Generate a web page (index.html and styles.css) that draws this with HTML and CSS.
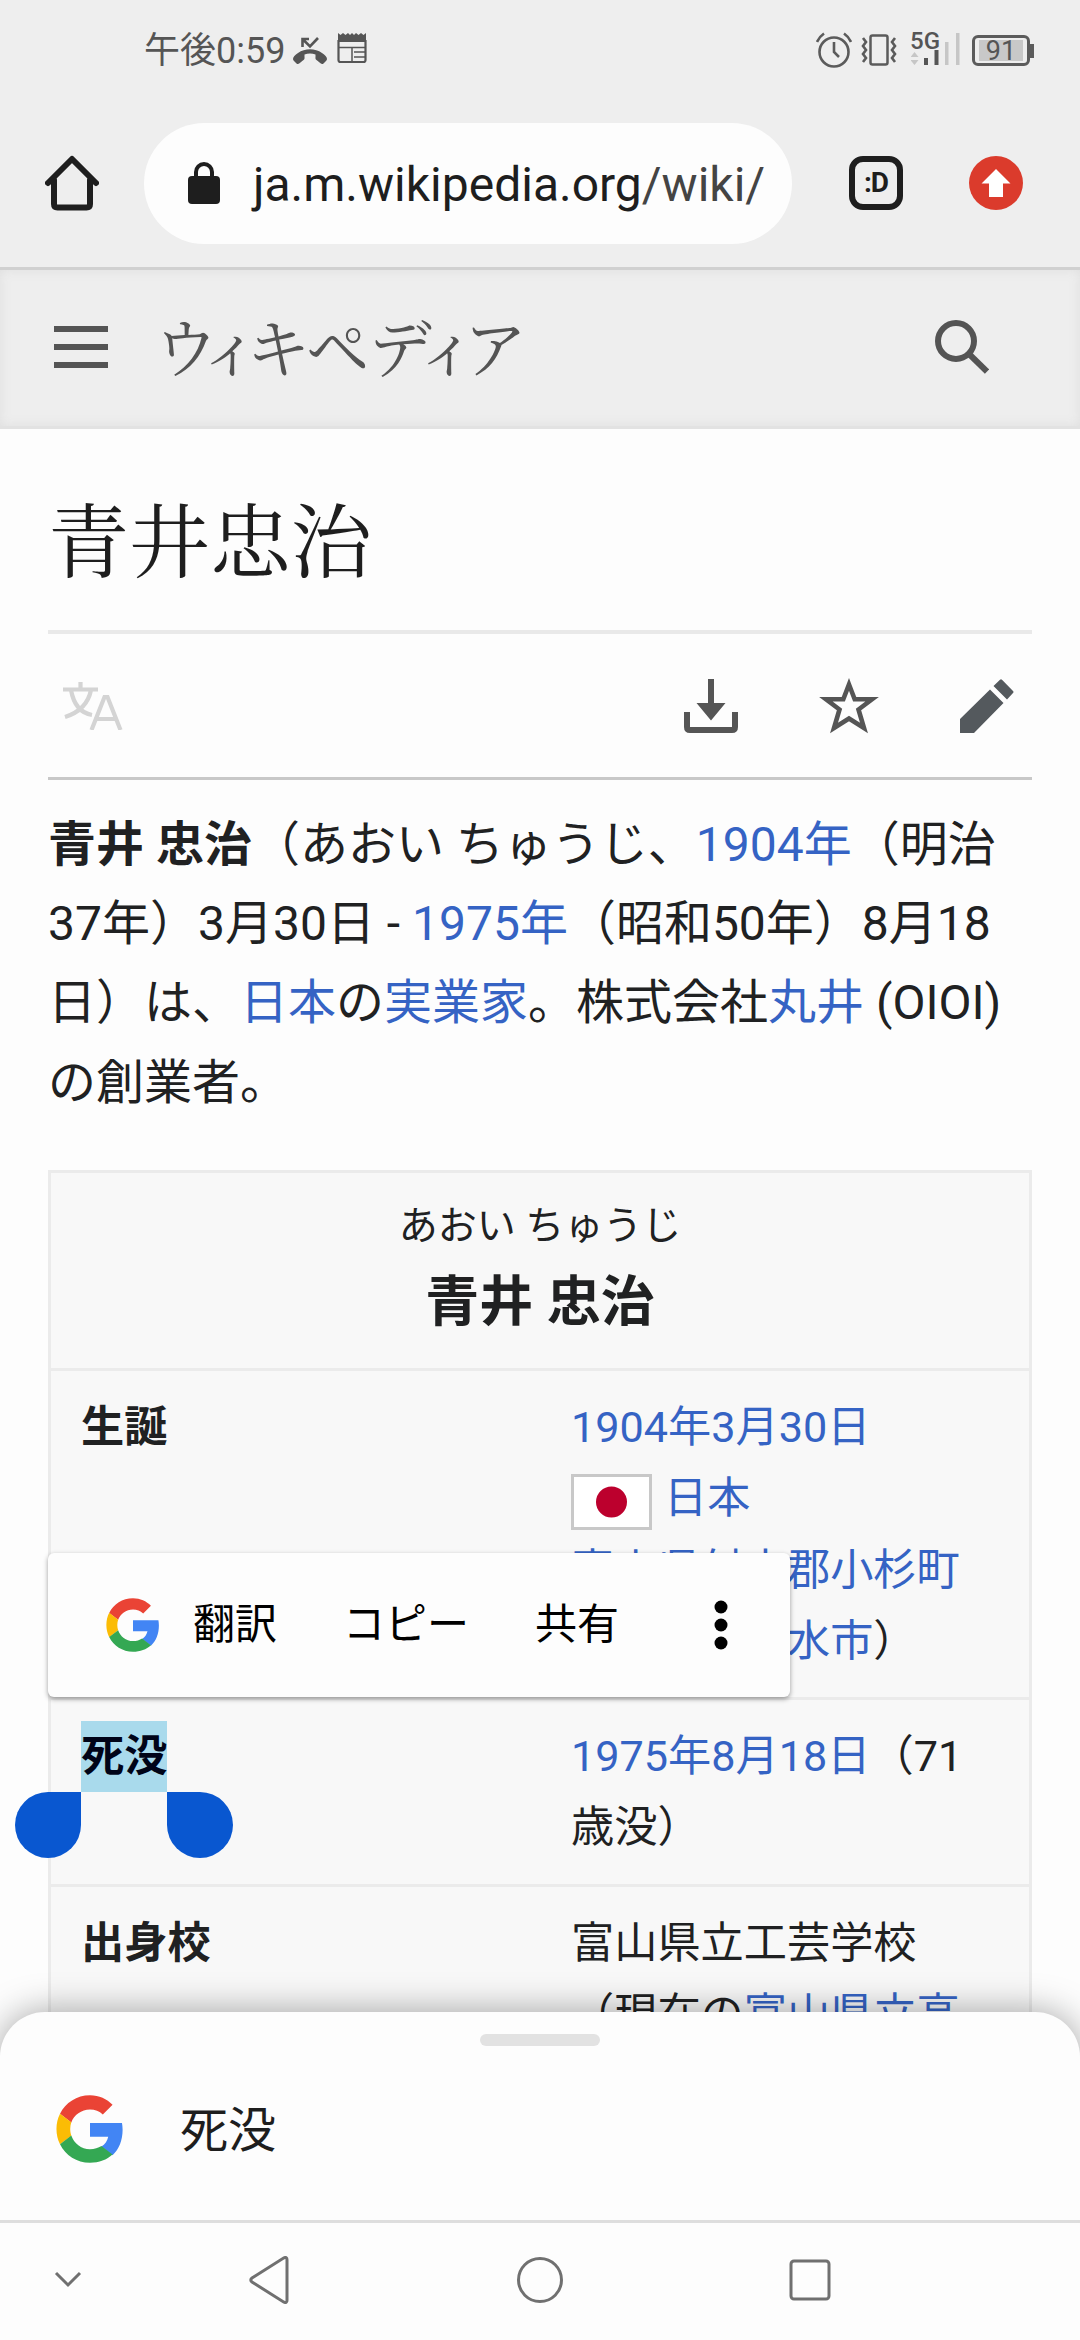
FILE: index.html
```html
<!DOCTYPE html>
<html lang="ja">
<head>
<meta charset="utf-8">
<title>青井忠治</title>
<link rel="stylesheet" href="styles.css">
</head>
<body>
<svg class="defs" aria-hidden="true">
  <symbol id="google" viewBox="2 2 44 44">
    <path fill="#ea4335" d="M24 11.400c3.200 0 6.100 1.100 8.300 3.200l6.300-6.300C34.900 4.600 29.900 2.200 24 2.200 15.400 2.200 8.100 7.100 4.600 14.200l7.300 5.600C13.600 15 18.400 11.400 24 11.400z"/>
    <path fill="#4285f4" d="M45.100 24.500c0-1.600-.200-3-.400-4.400H24v8.900h11.800c-.600 2.700-2.100 4.900-4.400 6.400l7.200 5.600c4.200-3.900 6.500-9.700 6.500-16.500z"/>
    <path fill="#fbbc05" d="M11.900 28.300c-.400-1.300-.700-2.800-.700-4.300s.300-2.900.700-4.300l-7.300-5.600C3.100 17.100 2.300 20.500 2.300 24s.800 6.900 2.300 9.900z"/>
    <path fill="#34a853" d="M24 45.800c5.900 0 10.900-1.900 14.600-5.300l-7.200-5.500c-2 1.300-4.500 2.100-7.400 2.100-5.700 0-10.400-3.800-12.100-8.900l-7.300 5.600C8.100 40.900 15.400 45.800 24 45.800z"/>
  </symbol>
</svg>
<div class="screen">
  <header class="statusbar">
    <span class="clock">午後0:59</span>
    <svg class="ic-missed" viewBox="0 0 36 30"><path fill="#555" d="M1 24c0-2 2-4 5-6 7-5 17-5 24 0 3 2 5 4 5 6 0 1-1 2-1.500 2.500l-2 2c-1 .8-2 .6-3-.2l-4-3.300c-1-.8-1.200-1.500-1-3v-2.500c-3.500-1.200-7.500-1.200-11 0V22c.2 1.500 0 2.200-1 3l-4 3.300c-1 .8-2 1-3 .2l-2-2C2 26 1 25 1 24z"/><path fill="none" stroke="#555" stroke-width="2.600" d="M10.500 12V4H17M11 4.500l7 7L26 3"/></svg>
    <svg class="ic-news" viewBox="0 0 30 32"><path fill="#555" d="M1 1l2.500 2L6 1l2.500 2L11 1l2 2 2-2 2 2 2-2 2.500 2L24 1l2.500 2L29 1v9H1z"/><path fill="none" stroke="#555" stroke-width="2.200" d="M1.500 8v20q0 2 2 2h23q2 0 2-2V8"/><path fill="none" stroke="#555" stroke-width="1.500" d="M1.500 15.500h27M15 15.500V30M17 20h11M17 25h11"/></svg>
    <span class="spacer"></span>
    <svg class="ic-alarm" viewBox="0 0 36 36"><g fill="none" stroke="#5b5b5b" stroke-width="2.600"><circle cx="18" cy="20" r="14.500"/><path d="M18 10v10l5 5M1 10q2-5 7-8.500M35 10q-2-5-7-8.500"/></g></svg>
    <svg class="ic-vib" viewBox="0 0 36 32"><g fill="none" stroke="#5b5b5b" stroke-width="2.500"><rect x="9.500" y="1.500" width="17" height="29" rx="2"/><path stroke-width="2.600" d="M2 4l3 4-3 4 3 4-3 4 3 4-3 4M34 4l-3 4 3 4-3 4 3 4-3 4 3 4"/></g></svg>
    <span class="signal"><span class="net">5G</span>
      <svg class="ic-bars" viewBox="0 0 50 34"><path fill="#c6c6c6" d="M3.500 20l4 5h-8zM3.500 33l4-5h-8zM34 10h3.500v23H34zM45 1h3.500v32H45z"/><path fill="#555" d="M13 26h4v7h-4zM23.500 18h4v15h-4z"/></svg>
    </span>
    <span class="battery"><span class="level">91</span></span>
  </header>
  <nav class="toolbar">
    <svg class="ic-home" viewBox="0 0 54 56"><path fill="none" stroke="#1e1e1e" stroke-width="6" stroke-linecap="round" stroke-linejoin="round" d="M3 28L27 4l24 24M9 25v24q0 3.500 3.500 3.500h29q3.500 0 3.500-3.500V25"/></svg>
    <div class="omnibox">
      <svg class="ic-lock" viewBox="0 0 32 42"><rect y="14" width="32" height="28" rx="4" fill="#1e1e1e"/><path fill="none" stroke="#1e1e1e" stroke-width="4" d="M8 16v-6a8 8 0 0 1 16 0v6"/></svg>
      <span class="url">ja.m.wikipedia.org<span class="path">/wiki/</span></span>
    </div>
    <span class="tabs">:D</span>
    <svg class="ic-update" viewBox="0 0 54 54"><circle cx="27" cy="27" r="27" fill="#db3b2c"/><path fill="#fff" d="M27 13l14.500 14.500H34V41H20V27.500h-7.500z"/></svg>
  </nav>
  <div class="sitehead">
    <svg class="ic-menu" viewBox="0 0 54 42"><path fill="#545454" d="M0 0h54v6H0zM0 18h54v6H0zM0 36h54v6H0z"/></svg>
    <span class="wordmark">ウィキペディア</span>
    <svg class="ic-search" viewBox="0 0 54 54"><g fill="none" stroke="#545454" stroke-width="6"><circle cx="21" cy="21" r="18"/><path d="M33 33l19 18.500"/></g></svg>
  </div>
  <main class="article">
    <h1>青井忠治</h1>
    <div class="actions">
      <svg class="ic-lang" viewBox="0 0 62 48"><g fill="none" stroke="#d4d4d4" stroke-width="4.200"><path d="M1 7.500h35M18.500 0v7M9 8q4 22 21 25M29 8Q25 28 3 35"/><path d="M29.500 48L42.500 15h3l13 33M34 37h20"/></g></svg>
      <span class="spacer"></span>
      <svg class="ic-dl" viewBox="0 0 54 54"><path fill="#555" d="M24 0h6v24h11.500L27 41.500 12.500 24H24z"/><path fill="none" stroke="#555" stroke-width="6" d="M3 33v15q0 3 3 3h42q3 0 3-3V33"/></svg>
      <svg class="ic-star" viewBox="0 0 60 57"><path fill="none" stroke="#555" stroke-width="4.600" d="M30 7.500l5.700 14.800H53L39.500 32.500 45 51 30 41.500 15 51l5.500-18.500L7 22.300h17.300z"/></svg>
      <svg class="ic-edit" viewBox="0 0 54 54"><path fill="#54595d" d="M0 40L30 10.500 43.500 24 14 54H0zM33.500 7L40 .800q1-1 2 0L53 12q1 1 0 2l-6 6.500z"/></svg>
    </div>
    <p class="lead"><b>青井 忠治</b>（あおい ちゅうじ、<a>1904年</a>（明治<br>37年）3月30日 - <a>1975年</a>（昭和50年）8月18<br>日）は、<a>日本</a>の<a>実業家</a>。株式会社<a>丸井</a> (OIOI)<br>の創業者。</p>
    <div class="infobox">
      <div class="caption"><span class="kana">あおい ちゅうじ</span><b>青井 忠治</b></div>
      <div class="row">
        <b>生誕</b>
        <div><a>1904年3月30日</a><br><span class="flagline"><svg class="flag" viewBox="0 0 81 56"><rect x="1.500" y="1.500" width="78" height="53" fill="#fff" stroke="#c8c8c8" stroke-width="3"/><circle cx="40.500" cy="28" r="15.500" fill="#bc002d"/></svg><a>日本</a></span><br><a>富山県射水郡小杉町</a><br>（現在の<a>射水市</a>）</div>
        <div class="popup">
          <svg class="g-small"><use href="#google"/></svg>
          <span class="translate">翻訳</span><span class="copy">コピー</span><span class="share">共有</span>
          <svg class="ic-more" viewBox="0 0 14 52"><circle cx="7" cy="8" r="6.500"/><circle cx="7" cy="26" r="6.500"/><circle cx="7" cy="44" r="6.500"/></svg>
        </div>
      </div>
      <div class="row">
        <b><span class="selected">死没<i class="grip start"></i><i class="grip end"></i></span></b>
        <div><a>1975年8月18日</a>（71<br>歳没）</div>
      </div>
      <div class="row">
        <b>出身校</b>
        <div>富山県立工芸学校<br>（現在の<a>富山県立高</a></div>
      </div>
    </div>
  </main>
  <section class="sheet">
    <span class="handle"></span>
    <div class="query"><svg class="g-large"><use href="#google"/></svg><span class="term">死没</span></div>
    <nav class="sysnav">
      <svg class="nav-hide" viewBox="0 0 28 18"><path d="M2 2l12 12L26 2"/></svg>
      <svg class="nav-back" viewBox="0 0 40 48"><path d="M35 1.800q3-1.300 3 2v40.400q0 3.300-3 2L3 26q-2.500-2 0-4z"/></svg>
      <svg class="nav-home" viewBox="0 0 48 48"><circle cx="24" cy="24" r="21.500"/></svg>
      <svg class="nav-recent" viewBox="0 0 42 42"><rect x="2" y="2" width="38" height="38" rx="3"/></svg>
    </nav>
  </section>
</div>
</body>
</html>
```
FILE: styles.css
```css
* { box-sizing: border-box; }
body {
  margin: 0;
  font-family: Roboto, "Noto Sans CJK JP", sans-serif;
  color: #202122;
  text-spacing-trim: space-all;
}
svg { display: block; flex: none; }
.defs { position: absolute; width: 0; height: 0; }
.screen {
  position: relative;
  width: 1080px;
  height: 2340px;
  overflow: hidden;
  background: #fdfdfd;
  display: flex;
  flex-direction: column;
}
.spacer { flex: 1; }

/* status bar */
.statusbar {
  flex: none;
  height: 100px;
  padding: 0 50px 0 144px;
  display: flex;
  align-items: center;
  background: #eee;
  color: #555;
}
.clock { padding-top: 2px; font-size: 36px; line-height: 98px; width: 148px; white-space: nowrap; }
.ic-missed { width: 36px; height: 30px; margin-right: 9px; }
.ic-news { width: 30px; height: 32px; margin-top: -4px; }
.ic-alarm { width: 36px; height: 36px; margin-right: 9px; }
.ic-vib { width: 36px; height: 32px; margin-right: 13px; }
.signal { display: block; width: 62px; height: 36px; }
.net { display: block; height: 16px; padding-top: 2px; font-size: 24px; line-height: 14px; font-weight: 500; }
.ic-bars { width: 50px; height: 34px; margin: -16px 0 0 1px; }
.battery {
  position: relative;
  width: 58px;
  height: 31px;
  border: 3px solid #5b5b5b;
  border-radius: 6px;
  padding: 2px 4px;
}
.battery::after {
  content: "";
  position: absolute;
  right: -7px;
  top: 6px;
  width: 4px;
  height: 14px;
  background: #5b5b5b;
}
.level {
  display: block;
  height: 21px;
  background: #c8c8c8;
  font-size: 27px;
  line-height: 22px;
  text-align: center;
}

/* browser toolbar */
.toolbar {
  flex: none;
  height: 170px;
  padding: 0 57px 1px 45px;
  display: flex;
  align-items: center;
  background: #eee;
  border-bottom: 3px solid #d0d0d0;
}
.ic-home { width: 54px; height: 56px; margin-right: 45px; }
.omnibox {
  width: 648px;
  height: 121px;
  border-radius: 61px;
  background: #fdfdfd;
  padding-left: 44px;
  display: flex;
  align-items: center;
}
.ic-lock { width: 32px; height: 42px; margin-right: 33px; }
.url { padding-top: 3px; font-size: 48px; line-height: 60px; color: #1e1e1e; white-space: nowrap; }
.path { color: #444; }
.tabs {
  width: 54px;
  height: 54px;
  margin: 0 66px 0 57px;
  border: 6px solid #1e1e1e;
  border-radius: 14px;
  font-size: 28px;
  line-height: 42px;
  font-weight: 700;
  letter-spacing: -1px;
  text-align: center;
  color: #1e1e1e;
}
.ic-update { width: 54px; height: 54px; }

/* site header */
.sitehead {
  flex: none;
  height: 159px;
  padding: 0 91px 3px 54px;
  display: flex;
  align-items: center;
  background: #eee;
  border-bottom: 3px solid #e2e2e2;
  box-shadow: inset 0 0 12px #dfdfdf;
}
.ic-menu { width: 54px; height: 42px; margin-right: 49px; }
.wordmark {
  flex: 1;
  padding-bottom: 4px;
  font-family: "Noto Serif CJK JP", "Noto Sans CJK JP", serif;
  font-size: 63.5px;
  font-weight: 400;
  line-height: 80px;
  font-feature-settings: "palt";
  white-space: nowrap;
  color: #545454;
}
.ic-search { width: 54px; height: 54px; }

/* article */
.article { padding: 0 48px; }
h1 {
  margin: 0;
  height: 205px;
  padding-top: 53px;
  border-bottom: 4px solid #e9e9e9;
  font-family: "Noto Serif CJK JP", "Noto Sans CJK JP", serif;
  font-size: 81px;
  line-height: 108px;
  font-weight: 400;
  color: #1e1e1e;
}
.actions {
  height: 146px;
  padding: 0 18px 0 14px;
  border-bottom: 3px solid #c8c8c8;
  display: flex;
  align-items: center;
}
.ic-lang { width: 62px; height: 48px; }
.ic-dl { width: 54px; height: 54px; margin-right: 81px; }
.ic-star { width: 60px; height: 57px; margin-right: 81px; }
.ic-edit { width: 54px; height: 54px; }
a { color: #3563c4; }
.lead {
  margin: 25px 0 48px;
  height: 317px;
  font-size: 48px;
  line-height: 79.2px;
  white-space: nowrap;
}

/* infobox */
.infobox {
  border: 3px solid #ebebeb;
  background: #f8f8f8;
  font-size: 43.2px;
  line-height: 71.3px;
}
.caption {
  height: 195px;
  padding-top: 17px;
  display: flex;
  flex-direction: column;
  align-items: center;
}
.kana { font-size: 39px; line-height: 72px; }
.caption b { font-size: 54px; line-height: 82px; }
.row {
  position: relative;
  display: grid;
  grid-template-columns: 490px 1fr;
  padding: 21px 0 20px 30px;
  border-top: 3px solid #ebebeb;
  white-space: nowrap;
}
.flagline { display: inline-flex; align-items: center; gap: 12px; height: 71.3px; vertical-align: top; }
.flag { width: 81px; height: 56px; margin-top: 7px; }

/* text selection and its menu */
.selected {
  position: relative;
  display: inline-block;
  background: #a9daec;
  color: #000418;
}
.grip {
  position: absolute;
  top: 100%;
  width: 66px;
  height: 66px;
  background: #0957d0;
}
.start { right: 100%; border-radius: 33px 0 33px 33px; }
.end { left: 100%; border-radius: 0 33px 33px 33px; }
.popup {
  position: absolute;
  left: -3px;
  bottom: 0;
  z-index: 2;
  width: 742px;
  height: 144px;
  padding-left: 58px;
  display: flex;
  align-items: center;
  background: #fdfdfd;
  border-radius: 6px;
  box-shadow: 0 2px 5px rgba(0, 0, 0, .38);
  color: #000;
  font-size: 42px;
  line-height: 60px;
}
.g-small { width: 54px; height: 54px; margin-right: 33px; }
.translate { width: 150px; }
.copy { width: 192px; }
.share { width: 179px; }
.ic-more { width: 14px; height: 52px; }

/* bottom sheet */
.sheet {
  position: absolute;
  inset: auto 0 0;
  z-index: 3;
  height: 328px;
  padding-top: 22px;
  display: flex;
  flex-direction: column;
  background: #fdfdfd;
  border-radius: 45px 45px 0 0;
  box-shadow: 0 0 36px rgba(0, 0, 0, .36);
}
.handle { align-self: center; width: 120px; height: 12px; border-radius: 6px; background: #e2e2e2; }
.query {
  height: 177px;
  padding: 0 0 8px 56px;
  display: flex;
  align-items: center;
  gap: 56px;
  border-bottom: 3px solid #dedede;
  font-size: 48px;
  color: #1e1e1e;
}
.g-large { width: 68px; height: 68px; }
.term { padding-bottom: 6px; }
.sysnav {
  height: 117px;
  padding: 0 0 3px 54px;
  display: flex;
  align-items: center;
  fill: none;
  stroke: #707070;
  stroke-width: 3px;
}
.nav-hide { width: 28px; height: 18px; margin-right: 167px; }
.nav-back { width: 40px; height: 48px; margin-right: 227px; }
.nav-home { width: 48px; height: 48px; margin-right: 225px; }
.nav-recent { width: 42px; height: 42px; }
```
